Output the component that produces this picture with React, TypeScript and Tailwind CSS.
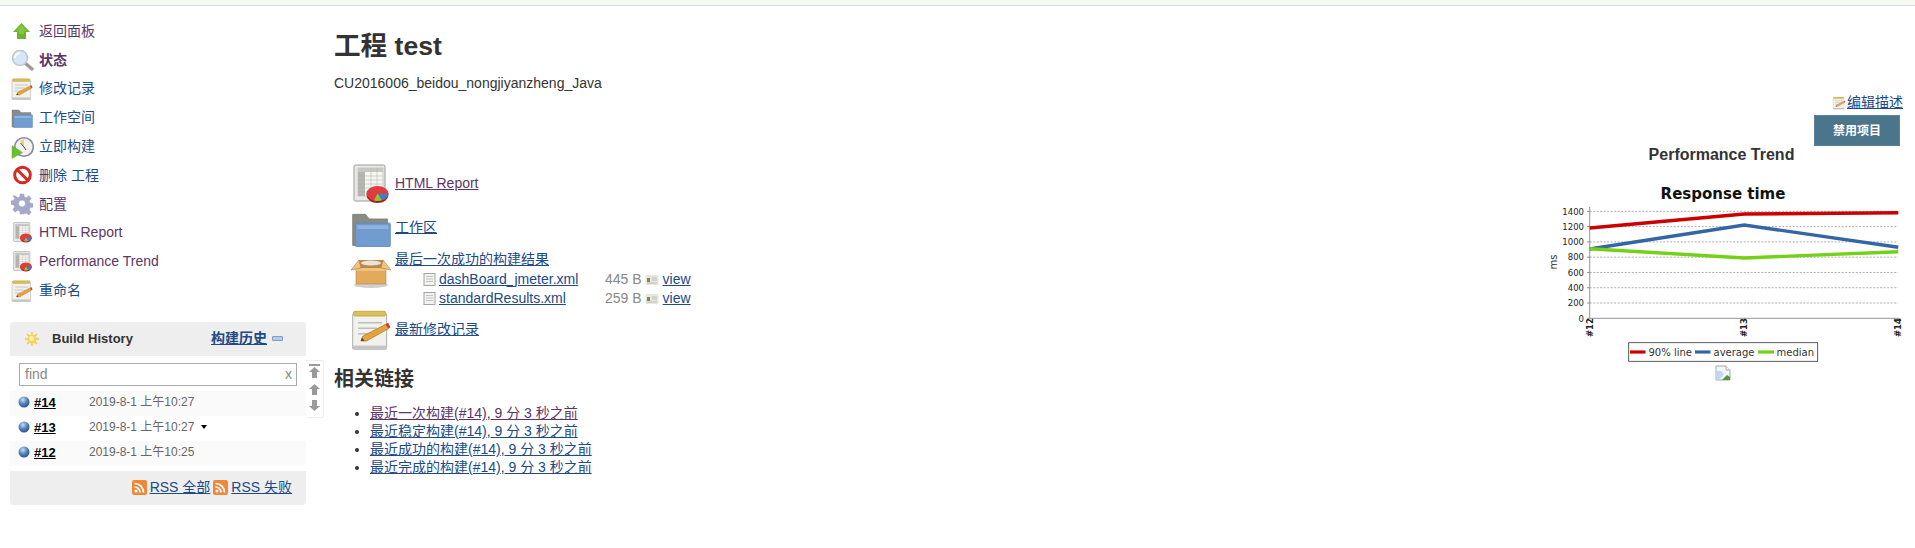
import type { ReactNode } from 'react';

const FONT = "font-['Liberation_Sans','Noto_Sans_CJK_SC',sans-serif]";

type IconProps = { size?: number; className?: string };

const UpIcon = ({ size = 24, className }: IconProps) => (
  <svg width={size} height={size} viewBox="0 0 24 24" className={className}>
    <path d="M11.500 4 20 13h-4v7H7v-7H3z" fill="#6cb52d" />
    <path d="M11.500 6 17 12h-3v3H9v-3H6z" fill="#86c645" />
  </svg>
);

const SearchIcon = ({ size = 24, className }: IconProps) => (
  <svg width={size} height={size} viewBox="0 0 24 24" className={className}>
    <path d="m15 15 7 6" stroke="#9a9a9a" strokeWidth="3.400" strokeLinecap="round" />
    <circle cx="10" cy="10" r="7.500" fill="#d5e6f6" stroke="#c2c6ca" strokeWidth="1.600" />
    <path d="M5 10a5 5 0 0 1 5-5" stroke="#fff" strokeWidth="2" fill="none" />
  </svg>
);

const NotepadIcon = ({ size = 24, className }: IconProps) => (
  <svg width={size} height={size} viewBox="0 0 24 24" className={className}>
    <rect x="2" y="3" width="18.500" height="19.500" rx="1" fill="#f1f1ee" stroke="#b5b5b1" strokeWidth="0.600" />
    <rect x="2" y="20.500" width="18.500" height="2" fill="#c4c4c2" />
    <rect x="2.500" y="1.800" width="17.500" height="2.600" rx="0.800" fill="#dcbf55" stroke="#b59a3c" strokeWidth="0.400" />
    <path d="M5 8h13M5 11h10M5 14h6" stroke="#bdbdb9" strokeWidth="0.800" />
    <path d="m6.500 18 1-2.600 12.500-6.500 1.600 2.300L9.500 18z" fill="#e8a23c" stroke="#a8772c" strokeWidth="0.400" />
    <path d="m20 8.900 1.600 2.300 1-.7-1.300-2.400z" fill="#d8332c" />
    <path d="m6.500 18 .6-1.800 1.300 1.500z" fill="#4a3a20" />
  </svg>
);

const FolderIcon = ({ size = 24, className }: IconProps) => (
  <svg width={size} height={size} viewBox="0 0 24 24" className={className}>
    <path d="M2 4h7l2 2.500h10V21H2z" fill="#8b8b85" stroke="#77776f" strokeWidth="0.400" />
    <rect x="3.500" y="8.800" width="19" height="12.700" rx="0.500" fill="#719ccf" stroke="#5f89bd" strokeWidth="0.500" />
    <path d="M4.500 10h17v2h-17z" fill="#8fb3de" />
  </svg>
);

const ClockIcon = ({ size = 24, className }: IconProps) => (
  <svg width={size} height={size} viewBox="0 0 24 24" className={className}>
    <circle cx="14" cy="12" r="9.300" fill="#f2f1ec" stroke="#8d8aa3" strokeWidth="1.600" />
    <path d="M14 12V4.500A7 7 0 0 0 10 6z" fill="#ead27a" />
    <path d="M14 12l-3.500-4M14 12l2 3" stroke="#4e4e4e" strokeWidth="1" />
    <path d="M2 10.500v13l10.500-6z" fill="#69bf2c" stroke="#5aa624" strokeWidth="0.400" />
  </svg>
);

const NoIcon = ({ size = 24, className }: IconProps) => (
  <svg width={size} height={size} viewBox="0 0 24 24" className={className}>
    <circle cx="12.500" cy="12" r="7.800" fill="#fff" stroke="#d42a24" strokeWidth="3" />
    <path d="m7 6.500 11 11" stroke="#d42a24" strokeWidth="3" />
  </svg>
);

const GearIcon = ({ size = 24, className }: IconProps) => (
  <svg width={size} height={size} viewBox="0 0 24 24" className={className}>
    <path
      d="M10 1h4l.6 3.300 2.100.9 2.800-2.200 2.500 3-2 2.700.8 2.100 3.200.8v3.800l-3.200.8-.8 2.100 2 2.700-2.500 3-2.800-2.200-2.100.9L14 23h-4l-.6-3.300-2.100-.9L4.500 21 2 18l2-2.700-.8-2.100L0 12.400V8.600l3.200-.8.800-2.100L2 3l2.500 0 2.800 2.200 2.100-.9z"
      fill="#a6a8ca"
      stroke="#9193b6"
      strokeWidth="0.400"
    />
    <circle cx="12" cy="11.500" r="3.800" fill="#fff" stroke="#8688ad" strokeWidth="0.500" />
  </svg>
);

const ReportIcon = ({ size = 24, className }: IconProps) => (
  <svg width={size} height={size} viewBox="0 0 36 40" className={className}>
    <rect x="1" y="1" width="31" height="36" rx="1.500" fill="#e9e9e6" stroke="#9a9a98" />
    <rect x="5" y="4" width="25" height="28" fill="#f6f6f3" stroke="#b5b5b1" strokeWidth="0.600" />
    <rect x="5" y="4" width="7" height="28" fill="#b5b5b1" />
    <rect x="5" y="4" width="25" height="4" fill="#c7c7c3" />
    <path d="M5 12h25M5 16h25M5 20h25M5 24h25M5 28h25M18 4v28M24 4v28" stroke="#a9a9a5" strokeWidth="0.500" />
    <ellipse cx="24.500" cy="31" rx="11" ry="8" fill="#a81e1e" />
    <ellipse cx="24.500" cy="29.500" rx="11" ry="7.500" fill="#e23b3b" />
    <path d="M24.500 29.500 35.500 29.500A11 7.500 0 0 1 29 36.300z" fill="#4e79b8" />
    <path d="M24.500 29.500 29 36.300A11 7.500 0 0 1 21 36.600z" fill="#8cc63f" />
  </svg>
);

const BoxIcon = ({ size = 42, className }: IconProps) => (
  <svg width={size} height={size * 0.76} viewBox="0 0 42 32" className={className}>
    <ellipse cx="21" cy="29" rx="17" ry="3" fill="#cfcfcf" />
    <path d="M9 4h24l3 9H6z" fill="#b98a4a" />
    <ellipse cx="21" cy="7" rx="10" ry="2.600" fill="#e8e4da" />
    <path d="M6 12h30v16H6z" fill="#e3aa5c" stroke="#b0813f" strokeWidth="0.600" />
    <path d="M6 12h30v3H6z" fill="#efc383" />
    <path d="M1 14 9 4l2 8zM41 14 33 4l-2 8z" fill="#efc383" stroke="#a8793a" strokeWidth="0.600" />
  </svg>
);

const FileIcon = () => (
  <svg width="13" height="13" viewBox="0 0 13 13">
    <rect x="1" y="0.500" width="11" height="12" fill="#f1f1ef" stroke="#a5a5a3" />
    <path d="M3 3.500h7M3 6h7M3 8.500h7" stroke="#c4c4c2" />
  </svg>
);

const ViewIcon = () => (
  <svg width="14" height="12" viewBox="0 0 14 12">
    <rect x="0.500" y="1" width="13" height="10" rx="1" fill="#e6e6e2" />
    <rect x="2" y="4" width="3" height="4" fill="#8a8440" />
    <path d="M7 4h5M7 6h5M2 9h10" stroke="#bdbdb8" />
  </svg>
);

const SunIcon = () => (
  <svg width="14" height="14" viewBox="0 0 14 14">
    <path d="M7 0v14M0 7h14M2 2l10 10M12 2 2 12" stroke="#f5c25a" strokeWidth="1.400" />
    <circle cx="7" cy="7" r="4.500" fill="#fbd34d" />
    <circle cx="6.500" cy="6.500" r="2.500" fill="#fff2b0" />
  </svg>
);

const BallIcon = () => (
  <svg width="12" height="12" viewBox="0 0 12 12">
    <defs>
      <radialGradient id="ball" cx="0.400" cy="0.300" r="0.800">
        <stop offset="0" stopColor="#c9dcf2" />
        <stop offset="0.500" stopColor="#4f80bd" />
        <stop offset="1" stopColor="#1f4a86" />
      </radialGradient>
    </defs>
    <circle cx="6" cy="6" r="5.500" fill="url(#ball)" />
  </svg>
);

const RssIcon = () => (
  <svg width="15" height="15" viewBox="0 0 15 15">
    <rect width="15" height="15" rx="2" fill="#f0883a" />
    <circle cx="4" cy="11" r="1.500" fill="#fff" />
    <path d="M2.500 7a5.500 5.500 0 0 1 5.500 5.500M2.500 3.500a9 9 0 0 1 9 9" stroke="#fff" strokeWidth="1.700" fill="none" />
  </svg>
);

const BrokenImage = () => (
  <svg width="16" height="16" viewBox="0 0 16 16">
    <path d="M1 1h10l4 4v10H1z" fill="#f2f5fa" stroke="#a8a8a8" />
    <path d="M11 1v4h4" fill="#fff" stroke="#a8a8a8" />
    <path d="M1 15V6h5l3 3-5 6z" fill="#c4d6ee" />
    <path d="M7 15l5-5 3 2v3z" fill="#4f9a3c" />
  </svg>
);

const Link = ({ children, visited, className = '' }: { children: ReactNode; visited?: boolean; className?: string }) => (
  <a href="#" className={`underline ${visited ? 'text-[#5c3566]' : 'text-[#204a87]'} ${className}`}>
    {children}
  </a>
);

const tasks = [
  { icon: UpIcon, label: '返回面板', color: 'text-[#5c3566]' },
  { icon: SearchIcon, label: '状态', color: 'text-[#5c3566] font-bold' },
  { icon: NotepadIcon, label: '修改记录', color: 'text-[#204a87]' },
  { icon: FolderIcon, label: '工作空间', color: 'text-[#204a87]' },
  { icon: ClockIcon, label: '立即构建', color: 'text-[#204a87]' },
  { icon: NoIcon, label: '删除 工程', color: 'text-[#204a87]' },
  { icon: GearIcon, label: '配置', color: 'text-[#5c3566]', size: 22 },
  { icon: ReportIcon, label: 'HTML Report', color: 'text-[#5c3566]', size: 21 },
  { icon: ReportIcon, label: 'Performance Trend', color: 'text-[#5c3566]', size: 21 },
  { icon: NotepadIcon, label: '重命名', color: 'text-[#204a87]' },
];

const builds = [
  { id: '#14', date: '2019-8-1 上午10:27', bg: 'bg-[#fafafa]' },
  { id: '#13', date: '2019-8-1 上午10:27', bg: 'bg-white', menu: true },
  { id: '#12', date: '2019-8-1 上午10:25', bg: 'bg-[#fafafa]' },
];

const BuildHistory = () => (
  <div className="relative ml-[10px] mt-[17px] w-[296px] rounded-[4px] bg-[#eeeeee]">
    <div className="flex h-[34px] items-center pl-[15px] pr-[23px]">
      <SunIcon />
      <span className="ml-[13px] text-[13px] font-bold text-[#333333]">Build History</span>
      <Link className="ml-auto text-[14px] font-bold">构建历史</Link>
      <span className="ml-[5px] h-[5px] w-[11px] rounded-[1px] border border-[#7c9ec9] bg-[#b6cbe6]" />
    </div>
    <div className="bg-white pb-[5px] pt-[7px]">
      <div className="mx-[9px] mb-[5px] flex h-[23px] items-center justify-between border border-[#aaaaaa] pl-[5px] pr-[4px] pt-[1px] text-[14px] text-[#888888]">
        <span>find</span>
        <span>x</span>
      </div>
      {builds.map((b) => (
        <div key={b.id} className={`flex h-[25px] items-center pb-[2px] pl-[8px] ${b.bg}`}>
          <BallIcon />
          <a href="#" className="ml-[4px] w-[55px] text-[13px] font-bold text-black underline">
            {b.id}
          </a>
          <span className="text-[12px] text-[#666666]">{b.date}</span>
          {b.menu && <span className="ml-[7px] h-0 w-0 border-x-[3.500px] border-t-[4px] border-x-transparent border-t-black" />}
        </div>
      ))}
    </div>
    <div className="flex h-[34px] items-center justify-end gap-[3px] pr-[14px] text-[14px]">
      <RssIcon />
      <Link>RSS 全部</Link>
      <RssIcon />
      <Link>RSS 失败</Link>
    </div>
    <div className="absolute left-[296px] top-[38px] flex h-[58px] w-[18px] flex-col items-center gap-[2px] rounded-r-[3px] border border-l-0 border-[#eeeeee] bg-white pt-[3px]">
      <svg width="11" height="14" viewBox="0 0 11 14">
        <path d="M0 0h11v2H0zM5.500 3 11 8H8v6H3V8H0z" fill="#9a9a9a" />
      </svg>
      <svg width="11" height="12" viewBox="0 0 11 12" className="mt-[3px]">
        <path d="M5.500 1 11 6H8v6H3V6H0z" fill="#9a9a9a" />
      </svg>
      <svg width="11" height="12" viewBox="0 0 11 12" className="mt-[3px]">
        <path d="M5.500 11 11 6H8V0H3v6H0z" fill="#9a9a9a" />
      </svg>
    </div>
  </div>
);

const Sidebar = () => (
  <aside className="w-[320px] shrink-0 pt-[11px]">
    <div className="flex flex-col pl-[10px]">
      {tasks.map((t) => (
        <div key={t.label} className={`flex h-[28.800px] items-center text-[14px] ${t.color}`}>
          <span className="flex w-[24px] shrink-0 justify-center">
            <t.icon size={t.size ?? 24} />
          </span>
          <span className="ml-[5px]">{t.label}</span>
        </div>
      ))}
    </div>
    <BuildHistory />
  </aside>
);

const recent = [
  { label: '最近一次构建(#14)', visited: true },
  { label: '最近稳定构建(#14)' },
  { label: '最近成功的构建(#14)' },
  { label: '最近完成的构建(#14)' },
];

const artifacts = [
  { name: 'dashBoard_jmeter.xml', size: '445 B' },
  { name: 'standardResults.xml', size: '259 B' },
];

const MainContent = () => (
  <main className="min-w-0 flex-1 pl-[14px] pt-[22px]">
    <h1 className="h-[36px] text-[26.600px] font-bold leading-[36px] text-[#333333]">工程 test</h1>
    <p className="mt-[11px] h-[16px] text-[14px] leading-[16px] text-[#333333]">CU2016006_beidou_nongjiyanzheng_Java</p>

    <div className="ml-[12px] mt-[70px] grid w-[400px] grid-cols-[49px_1fr] text-[14px]">
      <div className="flex h-[45px] items-center justify-center">
        <ReportIcon size={40} />
      </div>
      <div className="flex items-center">
        <Link visited>HTML Report</Link>
      </div>

      <div className="flex h-[45px] items-center justify-center">
        <FolderIcon size={44} />
      </div>
      <div className="flex items-center pb-[2px]">
        <Link>工作区</Link>
      </div>

      <div className="flex h-[56px] items-start justify-center pt-[5px]">
        <BoxIcon />
      </div>
      <div>
        <div className="h-[19px] leading-[16px]">
          <Link>最后一次成功的构建结果</Link>
        </div>
        {artifacts.map((a) => (
          <div key={a.name} className="flex h-[19px] items-center pl-[28px]">
            <FileIcon />
            <Link className="ml-[3px] w-[166px]">{a.name}</Link>
            <span className="text-[#888888]">{a.size}</span>
            <span className="ml-[3px] flex">
              <ViewIcon />
            </span>
            <Link className="ml-[4px]">view</Link>
          </div>
        ))}
      </div>

      <div className="flex h-[44px] items-center justify-center">
        <NotepadIcon size={44} />
      </div>
      <div className="flex items-center pb-[2px]">
        <Link>最新修改记录</Link>
      </div>
    </div>

    <h2 className="mt-[13px] h-[28px] text-[20px] font-bold leading-[28px] text-[#333333]">相关链接</h2>
    <ul className="mt-[11px] list-disc pl-[36px] text-[14px] leading-[18px] text-[#333333]">
      {recent.map((r) => (
        <li key={r.label}>
          <Link visited={r.visited}>{r.label}</Link>,<Link visited={r.visited}>&nbsp;9 分 3 秒之前</Link>
        </li>
      ))}
    </ul>
  </main>
);

const y = (v: number) => 148.3 - v * 0.0764;
const ticks = [0, 200, 400, 600, 800, 1000, 1200, 1400];
const xs = [46.7, 201.3, 355.3];

const TrendChart = () => (
  <svg width="360" height="195" viewBox="0 0 360 195" className="block font-['DejaVu_Sans',sans-serif]">
    <text x="180" y="29" textAnchor="middle" fontSize="15" fontWeight="bold" fill="#111111">
      Response time
    </text>
    {ticks.map((t) => (
      <g key={t}>
        {t > 0 && <line x1="46.700" x2="355" y1={y(t)} y2={y(t)} stroke="#999999" strokeWidth="0.800" strokeDasharray="2 1.500" />}
        <line x1="44" x2="46.700" y1={y(t)} y2={y(t)} stroke="#666666" strokeWidth="0.700" />
        <text x="41" y={y(t) + 3.200} textAnchor="end" fontSize="8.500" fill="#222222">
          {t}
        </text>
      </g>
    ))}
    <path d="M46.700 37v111.300H356" fill="none" stroke="#777777" strokeWidth="0.800" />
    <text transform="translate(14 92) rotate(-90)" textAnchor="middle" fontSize="10" fill="#333333">
      ms
    </text>
    {['#12', '#13', '#14'].map((l, i) => (
      <text key={l} transform={`translate(${xs[i] + 3} 167) rotate(-90)`} fontSize="8.500" fontWeight="bold" fill="#222222">
        {l}
      </text>
    ))}
    <polyline points={`${xs[0]},58 ${xs[1]},44 ${xs[2]},42.700`} fill="none" stroke="#cc0000" strokeWidth="3.400" />
    <polyline points={`${xs[0]},79 ${xs[1]},55 ${xs[2]},77.300`} fill="none" stroke="#3465a4" strokeWidth="3.400" />
    <polyline points={`${xs[0]},78.700 ${xs[1]},88 ${xs[2]},81.700`} fill="none" stroke="#73d216" strokeWidth="3.400" />
    <rect x="85.700" y="172.700" width="189" height="18.600" fill="#ffffff" stroke="#333333" strokeWidth="0.800" />
    <line x1="87" x2="102.500" y1="182" y2="182" stroke="#cc0000" strokeWidth="3.200" />
    <text x="105.500" y="185.500" fontSize="10" fill="#333333">90% line</text>
    <line x1="152" x2="167.500" y1="182" y2="182" stroke="#3465a4" strokeWidth="3.200" />
    <text x="170.500" y="185.500" fontSize="10" fill="#333333">average</text>
    <line x1="215" x2="231" y1="182" y2="182" stroke="#73d216" strokeWidth="3.200" />
    <text x="233.500" y="185.500" fontSize="10" fill="#333333">median</text>
  </svg>
);

const RightPanel = () => (
  <div className="flex w-[360px] shrink-0 flex-col pt-[84px] text-[14px]">
    <div className="flex h-[25px] items-center justify-end gap-[1px]">
      <NotepadIcon size={14} />
      <Link>编辑描述</Link>
    </div>
    <div className="flex justify-end pr-[3px]">
      <button className="h-[31px] w-[86px] border border-[#5a8299] bg-[#4b758b] text-[12px] font-bold text-white">禁用项目</button>
    </div>
    <div className="h-[18px] pr-[3px] text-center text-[16px] font-bold leading-[18px] text-[#333333]">Performance Trend</div>
    <div className="mt-[6px]">
      <TrendChart />
    </div>
    <div className="flex justify-center">
      <BrokenImage />
    </div>
  </div>
);

export default function App() {
  return (
    <div className={`h-[548px] w-full overflow-hidden bg-white ${FONT}`}>
      <div className="h-[6px] border-b border-[#dddddd] bg-[#f6f8f2]" />
      <div className="flex pr-[12px]">
        <Sidebar />
        <MainContent />
        <RightPanel />
      </div>
    </div>
  );
}
